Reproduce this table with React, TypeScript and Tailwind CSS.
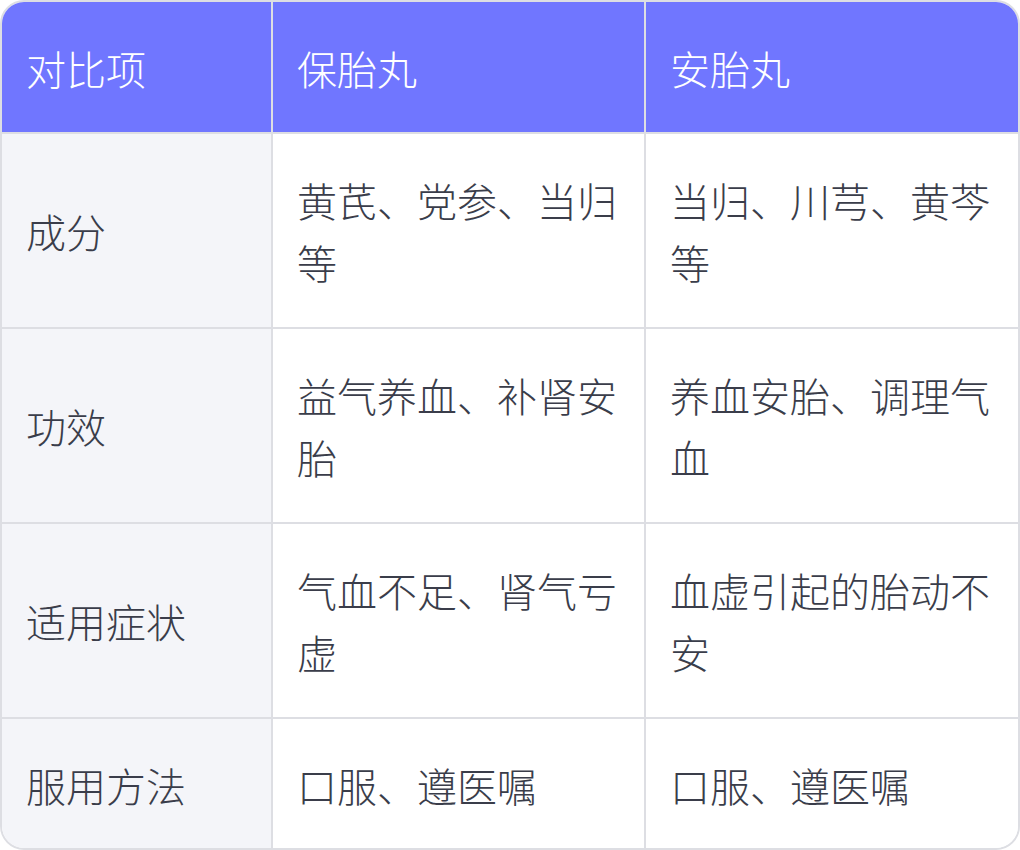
const rows = [
  { label: '成分', a: '黄芪、党参、当归等', b: '当归、川芎、黄芩等' },
  { label: '功效', a: '益气养血、补肾安胎', b: '养血安胎、调理气血' },
  { label: '适用症状', a: '气血不足、肾气亏虚', b: '血虚引起的胎动不安' },
  { label: '服用方法', a: '口服、遵医嘱', b: '口服、遵医嘱' },
]

const head = 'px-6 pt-[35px] pb-[33px] leading-[62px] border-[#dddee3] bg-[#7076ff] text-white border-b-2'

export default function App() {
  return (
    <div className="w-[1020px] h-[850px] bg-white font-['Noto_Sans_CJK_SC',sans-serif] text-[40px] font-light">
      <div className="overflow-hidden rounded-[24px] border-2 border-[#dddee3]">
        <div className="grid grid-cols-[271px_373px_1fr]">
          <div className={`${head} border-r-2`}>对比项</div>
          <div className={`${head} border-r-2`}>保胎丸</div>
          <div className={head}>安胎丸</div>
          {rows.map((r, i) => {
            const last = i === rows.length - 1
            const cell = last
              ? 'px-6 pt-[35px] pb-[32px] leading-[62px] border-[#dddee3]'
              : 'px-6 pt-[35px] pb-[34px] leading-[62px] border-[#dddee3] border-b-2'
            return (
              <div key={r.label} className="contents text-[#3a3d4a]">
                <div className={`${cell} border-r-2 flex items-center bg-[#f4f5f9]`}>{r.label}</div>
                <div className={`${cell} border-r-2 bg-white`}>{r.a}</div>
                <div className={`${cell} bg-white`}>{r.b}</div>
              </div>
            )
          })}
        </div>
      </div>
    </div>
  )
}
